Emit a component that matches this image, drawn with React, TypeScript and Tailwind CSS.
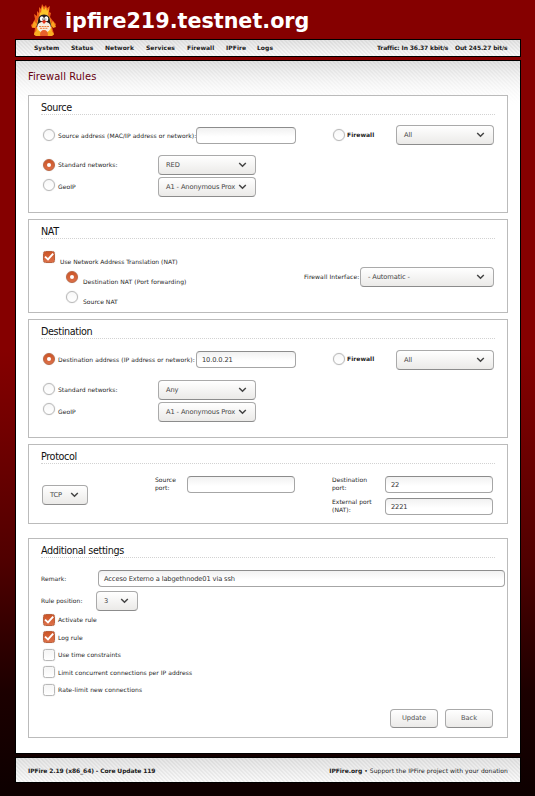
import React from "react";

type Box = { className?: string };

function Label({ className = "", tracking = "tracking-[0.05px]", children }: Box & { tracking?: string; children: React.ReactNode }) {
  return (
    <span className={`block shrink-0 whitespace-nowrap text-[6px] leading-[8px] text-[#1c1c1c] ${tracking} ${className}`}>
      {children}
    </span>
  );
}

function Radio({ checked = false, className = "" }: Box & { checked?: boolean }) {
  return (
    <span
      className={`flex h-3 w-3 shrink-0 items-center justify-center rounded-full border ${
        checked
          ? "border-[#b9623f] bg-gradient-to-b from-[#cc5527] to-[#dd7048]"
          : "border-[#b8b8b8] bg-gradient-to-b from-[#f8f8f8] to-white"
      } shadow-[0_0_1px_#bbb] ${className}`}
    >
      {checked && <span className="h-1 w-1 rounded-full bg-white" />}
    </span>
  );
}

function Check({ checked = false, className = "" }: Box & { checked?: boolean }) {
  return (
    <span
      className={`block h-3 w-3 shrink-0 rounded-[2.5px] border ${
        checked
          ? "border-[#b9623f] bg-gradient-to-b from-[#cc5527] to-[#dd7048]"
          : "border-[#b8b8b8] bg-gradient-to-b from-[#f5f5f5] to-white"
      } shadow-[0_0_1px_#bbb] ${className}`}
    >
      {checked && (
        <svg viewBox="0 0 10 10" className="block h-[10px] w-[10px]" fill="none" stroke="white" strokeWidth="1.9">
          <path d="M1 4.6 L4 7.4 L9.2 1.6" />
        </svg>
      )}
    </span>
  );
}

function Input({ value = "", className = "" }: Box & { value?: string }) {
  return (
    <span
      className={`flex h-[17px] shrink-0 items-center whitespace-nowrap rounded-[4px] border border-[#a6a6a6] border-t-[#8c8c8c] bg-gradient-to-b from-[#f1f1f1] to-white to-60% pl-[5px] pt-px text-[6.7px] leading-[9px] tracking-[-0.13px] text-[#333] ${className}`}
    >
      {value}
    </span>
  );
}

function Select({ value, className = "" }: Box & { value: string }) {
  return (
    <span
      className={`flex h-5 shrink-0 items-center justify-between rounded-[4px] border border-[#aaa] border-b-[#8c8c8c] bg-gradient-to-b from-white to-[#ebeae8] pl-[7px] pr-[8px] text-[6.7px] leading-[9px] tracking-[-0.12px] text-[#444] ${className}`}
    >
      <span className="whitespace-nowrap">{value}</span>
      <svg viewBox="0 0 9 6" className="h-[6px] w-[9px] shrink-0" fill="none" stroke="#444" strokeWidth="1.5">
        <path d="M1.2 1 L4.5 4.2 L7.8 1" />
      </svg>
    </span>
  );
}

function Button({ children, className = "" }: Box & { children: React.ReactNode }) {
  return (
    <button
      className={`h-[19px] w-12 rounded-[4px] border border-[#aaa] border-b-[#8c8c8c] bg-gradient-to-b from-white to-[#ebeae8] text-[6.7px] leading-[9px] text-[#555] ${className}`}
    >
      {children}
    </button>
  );
}

function Section({ title, className = "", children }: Box & { title: string; children: React.ReactNode }) {
  return (
    <section className={`w-[480px] border border-[#bbb] bg-white pl-3 ${className}`}>
      <h2 className="h-[19px] w-[454px] border-b border-dotted border-[#d2d2d2] pt-[5px] font-['DejaVu_Sans_Condensed','DejaVu_Sans',sans-serif] text-[10.7px] leading-[13px] tracking-[-0.36px] text-[#111]">
        {title}
      </h2>
      {children}
    </section>
  );
}

function AddressRows({ label, address = "", network, byAddress = false, selectOffset = "" }: {
  label: string;
  address?: string;
  network: string;
  byAddress?: boolean;
  selectOffset?: string;
}) {
  return (
    <>
      <div className="flex h-[30px] items-start pt-[10px]">
        <Radio checked={byAddress} className="ml-[2px] mt-[4px]" />
        <Label tracking="tracking-[0.07px]" className="ml-[3px] mt-[7px] w-[138px]">{label}</Label>
        <Input value={address} className="mt-[2px] w-[100px]" />
        <Radio className="ml-[37px] mt-[4px]" />
        <Label className="ml-[2px] mt-[6px] w-[49px] font-bold">Firewall</Label>
        <Select value="All" className={`w-[98px] ${selectOffset}`} />
      </div>
      <div className="mt-[10px] flex h-[22px] items-start">
        <Radio checked={!byAddress} className="ml-[2px] mt-[4px]" />
        <Label className={`ml-[3px] w-[100px] pt-[6px] ${selectOffset}`}>Standard networks:</Label>
        <Select value={network} className={`w-[98px] ${selectOffset}`} />
      </div>
      <div className="flex h-5 items-start">
        <Radio className="ml-[2px] mt-[2px]" />
        <Label className={`ml-[3px] w-[100px] pt-[6px] ${selectOffset}`}>GeoIP</Label>
        <Select value="A1 - Anonymous Prox" className={`w-[98px] ${selectOffset}`} />
      </div>
    </>
  );
}

function Logo() {
  return (
    <svg viewBox="0 0 26 34" className="h-[34px] w-[26px]">
      <path d="M3 32 L4 25 L1 25 L0 22 L2 20 L4 16 L3 11 L6 13 L6 8 L8 10 L8 4 L10 6 L11 1 L13 4 L15 2 L16 5 L19 3 L18 9 L20 10 L19 14 L22 18 L25 21 L24 24 L21 24 L23 31 L20 33 H6 Z" fill="#ee5f18" />
      <path d="M8 14 L9 9 L10 10 L11 3 L13 7 L15 4 L16 8 L18 5 L17 12 L19 15 L20 21 L21 31 H5 L6 24 L6 19 Z" fill="#fcc42a" />
      <path d="M7 18 Q7 11.500 13 11.500 Q19 11.500 19 18 L20.500 24 H5.500 Z" fill="#241a1b" />
      <ellipse cx="10.800" cy="15.700" rx="2" ry="2.500" fill="white" />
      <ellipse cx="15.300" cy="15.700" rx="2" ry="2.500" fill="white" />
      <circle cx="11.500" cy="16" r=".5" fill="#222" />
      <circle cx="14.900" cy="16" r=".5" fill="#222" />
      <ellipse cx="13" cy="24" rx="6.800" ry="5.500" fill="#f8ece0" />
      <path d="M10.500 18 L13 17.200 L15.700 18 L13 21 Z" fill="#e0301a" />
      <path d="M8 23.500 H18 M9 25.300 H17" stroke="#ee7a3a" strokeWidth="1" strokeDasharray="2 .7" />
      <path d="M1 24 L3 18 L6 21 L4 25 Z M25 24 L22 18 L20 21 L22 25 Z" fill="#f9a51f" />
      <path d="M3 31.500 Q4 27 8 28 L11 31 L9 33 H5 Z M23 31.500 Q21 27 18 28 L15 31 L17 33 H21 Z" fill="#f9ae22" />
      <path d="M9 32.500 Q9 27 13 27 Q17 27 17 32.500 Z" fill="#e8602c" />
    </svg>
  );
}

const hatch =
  "bg-[repeating-linear-gradient(45deg,#0000000b_0px,#0000000b_1.414px,transparent_1.414px,transparent_2.828px),linear-gradient(#e4e4e4,#fafafa)]";

export default function App() {
  return (
    <div className="h-[796px] w-[535px] overflow-hidden bg-[linear-gradient(#850000_0%,#850000_44%,#720000_54%,#510000_70%,#1c0000_87%,#0d0000_100%)] font-['DejaVu_Sans',sans-serif]">
      <header className="flex h-[39px] items-start pl-[31px] pt-[3px]">
        <Logo />
        <h1 className="ml-[8px] mt-[5px] whitespace-nowrap text-[20.7px] font-bold leading-[27px] text-white">
          ipfire219.testnet.org
        </h1>
      </header>

      <nav className={`ml-[15px] flex h-[18px] w-[506px] border border-black pl-[18px] pt-[4px] ${hatch}`}>
        <Label className="w-[37px] font-bold">System</Label>
        <Label className="w-[34px] font-bold">Status</Label>
        <Label className="w-[41px] font-bold">Network</Label>
        <Label className="w-[41px] font-bold">Services</Label>
        <Label className="w-[39px] font-bold">Firewall</Label>
        <Label className="w-[31px] font-bold">IPFire</Label>
        <Label className="w-[120px] font-bold">Logs</Label>
        <Label tracking="tracking-[-0.13px]" className="w-[78px] font-bold">Traffic: In 36.37 kbit/s</Label>
        <Label tracking="tracking-[-0.13px]" className="font-bold">Out 245.27 bit/s</Label>
      </nav>

      <main className="ml-[15px] mt-[3px] h-[694px] w-[506px] border border-black bg-white bg-[linear-gradient(#ffffff00,#ffffff),repeating-linear-gradient(45deg,#0000000b_0px,#0000000b_1.414px,transparent_1.414px,transparent_2.828px),linear-gradient(#e2e2e2,#ffffff)] bg-[length:100%_44px] bg-no-repeat pl-3">
        <h1 className="h-[34px] pt-[9px] font-['DejaVu_Sans_Condensed','DejaVu_Sans',sans-serif] text-[11px] leading-[14px] tracking-[0.1px] text-[#66000f]">
          Firewall Rules
        </h1>

        <Section title="Source" className="h-[118px]">
          <AddressRows label="Source address (MAC/IP address or network):" network="RED" />
        </Section>

        <Section title="NAT" className="mt-[6px] h-[94px]">
          <div className="flex items-start">
            <div className="w-[263px] pt-[12px]">
              <div className="flex h-5 items-start pl-[2px]">
                <Check checked />
                <Label tracking="tracking-[0.02px]" className="ml-[5px] mt-[7px]">Use Network Address Translation (NAT)</Label>
              </div>
              <div className="flex h-5 items-start pl-[25px]">
                <Radio checked />
                <Label tracking="tracking-[0.08px]" className="ml-[5px] mt-[7px]">Destination NAT (Port forwarding)</Label>
              </div>
              <div className="flex h-5 items-start pl-[25px]">
                <Radio />
                <Label className="ml-[5px] mt-[7px]">Source NAT</Label>
              </div>
            </div>
            <Label tracking="tracking-[0.1px]" className="mt-[34px] w-[56px]">Firewall Interface:</Label>
            <Select value="- Automatic -" className="mt-[28px] w-[134px]" />
          </div>
        </Section>

        <Section title="Destination" className="mt-[6px] h-[119px]">
          <AddressRows
            label="Destination address (IP address or network):"
            address="10.0.0.21"
            network="Any"
            byAddress
            selectOffset="mt-px"
          />
        </Section>

        <Section title="Protocol" className="mt-[6px] h-[80px]">
          <div className="flex items-start pt-[12px]">
            <Select value="TCP" className="ml-px mt-[9px] w-[46px]" />
            <Label className="ml-[67px] w-[32px]">Source<br />port:</Label>
            <Input className="w-[108px]" />
            <div className="ml-[37px]">
              <div className="flex h-[22px] items-start">
                <Label className="w-[53px]">Destination<br />port:</Label>
                <Input value="22" className="w-[108px]" />
              </div>
              <div className="flex h-[22px] items-start">
                <Label className="w-[53px]">External port<br />(NAT):</Label>
                <Input value="2221" className="w-[108px]" />
              </div>
            </div>
          </div>
        </Section>

        <Section title="Additional settings" className="mt-[14px] h-[200px]">
          <div className="flex h-[33px] items-start pt-[12px]">
            <Label className="mt-[5px] w-[57px]">Remark:</Label>
            <Input value="Acceso Externo a labgethnode01 via ssh" className="w-[407px]" />
          </div>
          <div className="flex h-[23px] items-start">
            <Label className="mt-[6px] w-[55px]">Rule position:</Label>
            <Select value="3" className="w-[42px]" />
          </div>
          <div className="flex h-[17px] items-start pl-[2px]">
            <Check checked />
            <Label className="ml-[3px] mt-[2px]">Activate rule</Label>
          </div>
          <div className="flex h-[18px] items-start pl-[2px]">
            <Check checked />
            <Label className="ml-[3px] mt-[3px]">Log rule</Label>
          </div>
          <div className="flex h-[17px] items-start pl-[2px]">
            <Check />
            <Label className="ml-[3px] mt-[2px]">Use time constraints</Label>
          </div>
          <div className="flex h-[18px] items-start pl-[2px]">
            <Check />
            <Label className="ml-[3px] mt-[3px]">Limit concurrent connections per IP address</Label>
          </div>
          <div className="flex h-[25px] items-start pl-[2px]">
            <Check />
            <Label tracking="tracking-[0.1px]" className="ml-[3px] mt-[2px]">Rate-limit new connections</Label>
          </div>
          <div className="flex justify-end gap-[7px] pr-[14px]">
            <Button>Update</Button>
            <Button>Back</Button>
          </div>
        </Section>
      </main>

      <footer className={`ml-[15px] mt-[3px] flex h-[26px] w-[506px] items-center justify-between border border-black px-[12px] pt-px ${hatch}`}>
        <Label tracking="tracking-[-0.1px]" className="font-bold">IPFire 2.19 (x86_64) - Core Update 119</Label>
        <Label tracking="tracking-[0.08px]"><b className="tracking-[-0.05px]">IPFire.org</b> • Support the IPFire project with your donation</Label>
      </footer>
    </div>
  );
}
